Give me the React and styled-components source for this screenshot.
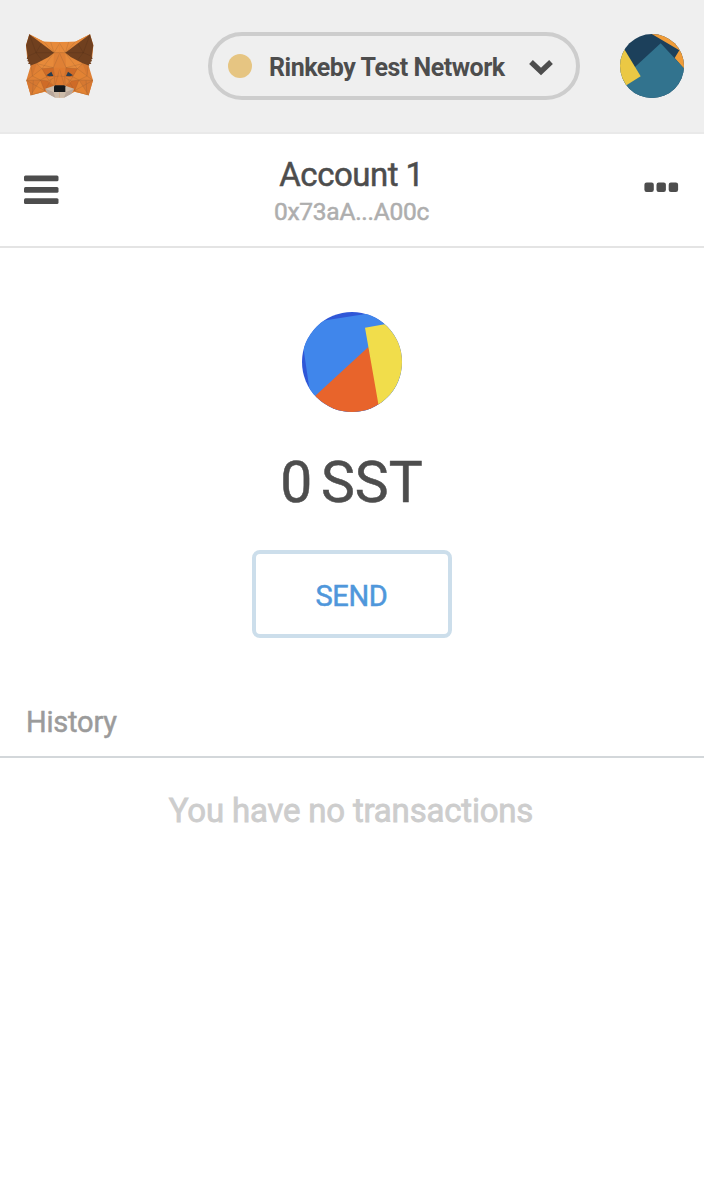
import React from 'react';
import styled, { createGlobalStyle } from 'styled-components';

const GlobalStyle = createGlobalStyle`
  * { box-sizing: border-box; }
  body { margin: 0; background: #fff; font-family: Roboto, 'Liberation Sans', sans-serif; color: #4d4d4d; }
`;

const Screen = styled.div`
  width: 704px;
  height: 1190px;
  background: #fff;
  display: flex;
  flex-direction: column;
`;

const Header = styled.header`
  height: 134px;
  flex: none;
  display: flex;
  align-items: center;
  padding: 0 20px 0 25px;
  background: #efefef;
  border-bottom: 2px solid #e9e9e9;
`;

const NetworkPicker = styled.button`
  width: 372px;
  height: 68px;
  margin: 0 40px 0 auto;
  padding: 0 23px 0 16px;
  display: flex;
  align-items: center;
  border: 4px solid #cdcdcd;
  border-radius: 34px;
  background: transparent;
  color: #4d4d4d;
  font-family: inherit;
`;

const NetworkDot = styled.i`
  width: 24px;
  height: 24px;
  border-radius: 50%;
  background: #e6c582;
`;

const Label = styled.span`
  font-size: ${p => p.$size}px;
  line-height: ${p => p.$line}px;
  font-weight: ${p => p.$weight || 400};
  letter-spacing: ${p => p.$track || 0}px;
  color: ${p => p.$color || '#4d4d4d'};
  -webkit-text-stroke: ${p => p.$stroke ?? 0.5}px currentColor;
  white-space: pre;
`;

const NetworkName = styled(Label)`
  margin: 3px auto 0 17px;
`;

const Chevron = styled.svg`
  margin-top: 2px;
`;

const AccountBar = styled.section`
  height: 114px;
  flex: none;
  display: flex;
  justify-content: space-between;
  padding: 0 25px 0 24px;
  border-bottom: 2px solid #e4e4e4;
`;

const MenuIcon = styled.svg`
  margin-top: ${p => p.$top}px;
  flex: none;
`;

const AccountText = styled.div`
  display: flex;
  flex-direction: column;
  align-items: center;
  padding-top: 22px;
`;

const Balance = styled.section`
  display: flex;
  flex-direction: column;
  align-items: center;
  padding-top: 64px;
`;

const TokenImage = styled.svg`
  flex: none;
`;

const Amount = styled(Label)`
  margin-top: 37px;
  padding-right: 1px;
  word-spacing: -5.5px;
`;

const SendButton = styled.button`
  width: 200px;
  height: 88px;
  margin-top: 33px;
  padding: 3px 1px 0 0;
  border: 4px solid #ccdeeb;
  border-radius: 8px;
  background: #fff;
  font-family: inherit;
`;

const HistoryHeading = styled.h2`
  margin: 0;
  height: 120px;
  padding: 64px 0 0 26px;
  border-bottom: 2px solid #d3d7da;
  line-height: 40px;
`;

const EmptyState = styled.p`
  margin: 33px 0 0;
  padding-right: 2px;
  text-align: center;
  line-height: 40px;
`;

function FoxHalf() {
  return (
    <g strokeLinejoin="round">
      <path fill="#df8035" d="M40 25 84 47 104 48H132V214H118L86 197 44 208 31 163 45 116 33 92 30 58Z" />
      <path fill="#e78a3a" d="M40 25 84 47 114 80ZM84 47 132 48V78L114 80ZM114 80 62 113 78 128 112 125Z" />
      <path fill="#d67831" d="M31 163 73 162 44 208ZM45 118 62 113 49 150Z" />
      <path fill="#e38333" d="M49 150 78 128 92 152 73 162ZM73 162 86 197 44 208Z" />
      <path fill="#cf6b27" d="M78 128 112 125 116 152 92 154ZM73 162 96 165 114 181 86 194Z" />
      <path fill="#df7b30" d="M112 125H132V178H117L114 155Z" />
      <path fill="#70401f" d="M40 25 114 80 98 93 62 112 42 119 43 115 36 113 39 108 34 105 36 100 32 98 35 91 30 58Z" />
      <path fill="none" stroke="#81532f" strokeOpacity=".45" strokeWidth="1.5" d="M84 47 114 80 131 52M104 48 114 80H131M114 80 78 128 112 125 131 82M62 113 78 128 49 150 45 118M62 113 112 125M49 150 31 163 73 162 49 150M73 162 44 208 86 194 73 162 92 152 78 128M52 163 49 207M31 163 86 194M92 154 114 181 116 152 131 150M112 125 116 152M131 130 117 178M73 162 96 165 114 155M106 160 86 194" />
      <path fill="none" stroke="#4d2d19" strokeOpacity=".5" strokeWidth="1.5" d="M40 25 60 80 35 91M60 80 114 80M60 80 76 53M60 80 78 103" />
      <path fill="#ccbba9" d="M88 188 114 179H132V215H118L96 203Z" />
      <path fill="#b7a69a" d="M88 188 112 198 118 215 96 203Z" />
      <path fill="#293e50" d="M91 148 106 137 112 150 100 151Z" />
    </g>
  );
}

const FoxLogo = () => (
  <svg width="69" height="64" viewBox="27 24 207 192">
    <FoxHalf />
    <g transform="translate(262 0) scale(-1 1)"><FoxHalf /></g>
    <path fill="#16191b" d="M117 178H145L148 181V198H114V181Z" />
  </svg>
);

const HeaderAvatar = () => (
  <svg width="64" height="64" viewBox="30 30 192 192">
    <clipPath id="headerCircle"><circle cx="126" cy="126" r="96" /></clipPath>
    <g clipPath="url(#headerCircle)">
      <path fill="#1c405b" d="M30 30H222V222H30Z" />
      <path fill="#f09c38" d="M122 28H225V138L194 102 208 79Z" />
      <path fill="#32738e" d="M152 58 225 136V224H30V178L78 126Z" />
      <path fill="#ebc844" d="M43 76 92 157 49 184 25 195V80Z" />
    </g>
  </svg>
);

const TokenAvatar = () => (
  <TokenImage width="100" height="100" viewBox="30 30 300 300">
    <clipPath id="tokenCircle"><circle cx="180" cy="180" r="150" /></clipPath>
    <g clipPath="url(#tokenCircle)">
      <path fill="#2f57d7" d="M30 30H330V330H30Z" />
      <path fill="#4086eb" d="M25 58 92 56 216 37 300 25 340 330H61L51 252 36 150Z" />
      <path fill="#e8642b" d="M229 135 70 281 30 340H280Z" />
      <path fill="#f1dd4b" d="M219 77 278 67 340 50V330H263L259 306Z" />
    </g>
  </TokenImage>
);

export default function App() {
  return (
    <Screen>
      <GlobalStyle />
      <Header>
        <FoxLogo />
        <NetworkPicker>
          <NetworkDot />
          <NetworkName $size={25} $line={32} $weight={700} $track={-0.48} $stroke={0}>Rinkeby Test Network</NetworkName>
          <Chevron width="24" height="17" viewBox="0 0 24 17">
            <path d="M2 3 12 12.5 22 3" fill="none" stroke="#4d4d4d" strokeWidth="5.4" />
          </Chevron>
        </NetworkPicker>
        <HeaderAvatar />
      </Header>
      <AccountBar>
        <MenuIcon $top={41} width="35" height="30" viewBox="0 0 35 30" fill="#4d4d4d">
          <rect y=".5" width="34.5" height="5.8" rx="1.5" />
          <rect y="12" width="34.5" height="5.8" rx="1.5" />
          <rect y="23.3" width="34.5" height="5.8" rx="1.5" />
        </MenuIcon>
        <AccountText>
          <Label $size={33} $line={38} $track={-0.5}>Account 1</Label>
          <Label $size={24.5} $line={36} $track={-0.25} $color="#aeaeae">0x73aA...A00c</Label>
        </AccountText>
        <MenuIcon $top={48} width="35" height="11" viewBox="0 0 35 11" fill="#4d4d4d">
          <rect x=".4" y=".5" width="9.4" height="9.4" rx="2.2" />
          <rect x="12.5" y=".5" width="9.4" height="9.4" rx="2.2" />
          <rect x="24.7" y=".5" width="9.4" height="9.4" rx="2.2" />
        </MenuIcon>
      </AccountBar>
      <Balance>
        <TokenAvatar />
        <Amount $size={57} $line={68}>0 SST</Amount>
        <SendButton><Label $size={29} $line={36} $track={-0.3} $color="#4f97db">SEND</Label></SendButton>
      </Balance>
      <HistoryHeading><Label $size={29} $line={40} $track={-0.2} $color="#9b9b9b">History</Label></HistoryHeading>
      <EmptyState><Label $size={33} $line={40} $track={-0.2} $stroke={0.8} $color="#cdcdcd">You have no transactions</Label></EmptyState>
    </Screen>
  );
}
